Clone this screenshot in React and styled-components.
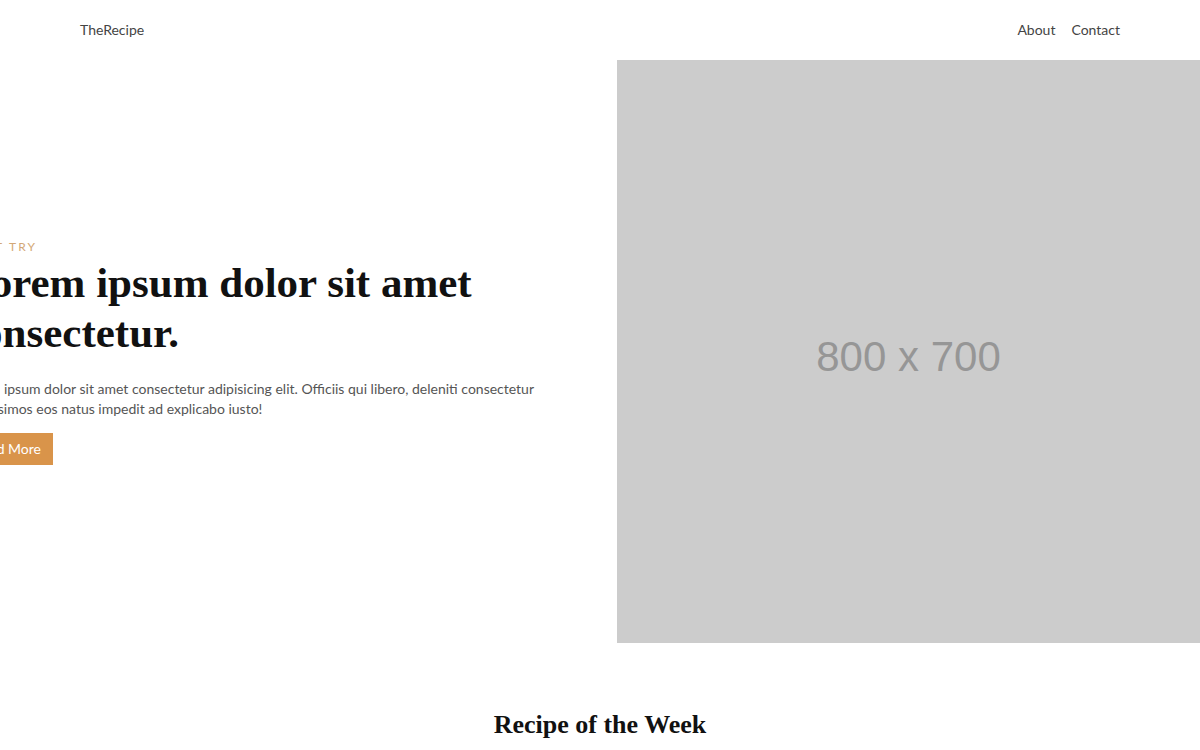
import styled, { createGlobalStyle } from 'styled-components';

const GlobalStyle = createGlobalStyle`
  html, body {
    margin: 0;
    padding: 0;
    overflow-x: hidden;
    background: #fff;
  }
  body::-webkit-scrollbar {
    display: none;
  }
  * {
    box-sizing: border-box;
  }
`;

export default function App() {
  return (
    <>
      <GlobalStyle />
      <Header>
        <Logo>TheRecipe</Logo>
        <Nav>
          <NavLink href="#">About</NavLink>
          <NavLink href="#">Contact</NavLink>
        </Nav>
      </Header>
      <Hero>
        <HeroText>
          <Eyebrow>Must Try</Eyebrow>
          <Title>Lorem ipsum dolor sit amet consectetur.</Title>
          <Lead>
            Lorem ipsum dolor sit amet consectetur adipisicing elit. Officiis qui libero, deleniti consectetur
            dignissimos eos natus impedit ad explicabo iusto!
          </Lead>
          <Button href="#">Read More</Button>
        </HeroText>
        <Placeholder>800 x 700</Placeholder>
      </Hero>
      <Section>
        <SectionTitle>Recipe of the Week</SectionTitle>
      </Section>
    </>
  );
}

const Header = styled.header`
  height: 60px;
  padding: 0 80px;
  display: flex;
  align-items: center;
  justify-content: space-between;
  font-family: Lato, "Open Sans", sans-serif;
  font-size: 14px;
`;

const Logo = styled.a`
  color: #444;
  text-decoration: none;
  margin-top: -1px;
`;

const Nav = styled.nav`
  display: flex;
  gap: 16px;
  margin-top: -1px;
`;

const NavLink = styled.a`
  color: #444;
  text-decoration: none;
`;

const Hero = styled.section`
  display: grid;
  grid-template-columns: 617px 583px;
  height: 583px;
`;

const HeroText = styled.div`
  display: flex;
  flex-direction: column;
  justify-content: center;
  align-items: flex-start;
  margin-left: -38px;
  padding-right: 70px;
  font-family: Lato, "Open Sans", sans-serif;
`;

const Eyebrow = styled.span`
  font-size: 12px;
  letter-spacing: 2.2px;
  text-transform: uppercase;
  color: #d3a876;
  margin-bottom: 4px;
`;

const Title = styled.h1`
  margin: 0 0 21px;
  font-family: "Liberation Serif", "DejaVu Serif", serif;
  font-weight: 700;
  font-size: 43px;
  line-height: 50px;
  color: #111;
`;

const Lead = styled.p`
  margin: 0 0 14px;
  font-size: 14px;
  line-height: 20px;
  color: #555;
`;

const Button = styled.a`
  display: inline-block;
  height: 32px;
  line-height: 32px;
  padding: 0 12px;
  background: #d9944a;
  color: #fff;
  font-size: 14px;
  text-decoration: none;
`;

const Placeholder = styled.div`
  background: #cccccc;
  display: flex;
  align-items: center;
  justify-content: center;
  padding-top: 10px;
  font-family: "Liberation Sans", Arial, sans-serif;
  font-size: 42px;
  color: #969696;
`;

const Section = styled.section`
  padding: 67px 0 40px;
  text-align: center;
`;

const SectionTitle = styled.h2`
  margin: 0;
  font-family: "Liberation Serif", "DejaVu Serif", serif;
  font-weight: 700;
  font-size: 26px;
  color: #111;
`;
